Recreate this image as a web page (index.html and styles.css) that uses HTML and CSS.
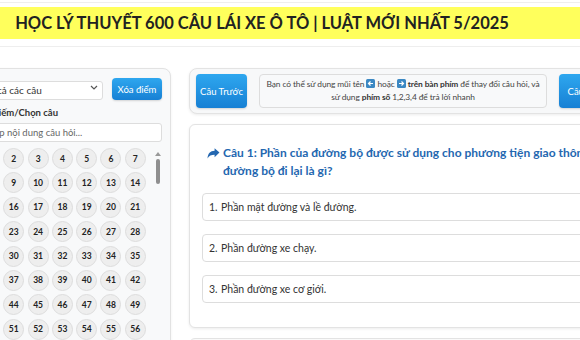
FILE: index.html
```html
<!DOCTYPE html>
<html lang="vi">
<head>
    <meta charset="UTF-8">
    <meta name="viewport" content="width=device-width, initial-scale=1.0">
    <title>Học lý thuyết 600 câu lái xe ô tô</title>
    <link rel="stylesheet" href="styles.css">
</head>
<body>
    <div class="topbar">
        <h1 class="banner">HỌC LÝ THUYẾT 600 CÂU LÁI XE Ô TÔ | LUẬT MỚI NHẤT 5/2025</h1>
    </div>

    <div class="layout">
        <!-- Danh sách câu hỏi -->
        <aside class="sidebar">
            <div class="filter-row">
                <div class="select-wrap">
                    <select class="select">
                        <option>Tất cả các câu</option>
                    </select>
                    <svg class="chevron" width="8" height="5" viewBox="0 0 8 5"><path d="M1 1l3 3 3-3" fill="none" stroke="#555" stroke-width="1.2"/></svg>
                </div>
                <button class="button blue small">Xóa điểm</button>
            </div>
            <label class="label" for="search">Tìm kiếm/Chọn câu</label>
            <input class="search" id="search" type="text" placeholder="Nhập nội dung câu hỏi...">
            <div class="grid-wrap">
                <div class="grid">
                    <span class="num active">1</span><span class="num">2</span><span class="num">3</span><span class="num">4</span><span class="num">5</span><span class="num">6</span><span class="num">7</span>
                    <span class="num">8</span><span class="num">9</span><span class="num">10</span><span class="num">11</span><span class="num">12</span><span class="num">13</span><span class="num">14</span>
                    <span class="num">15</span><span class="num">16</span><span class="num">17</span><span class="num">18</span><span class="num">19</span><span class="num">20</span><span class="num">21</span>
                    <span class="num">22</span><span class="num">23</span><span class="num">24</span><span class="num">25</span><span class="num">26</span><span class="num">27</span><span class="num">28</span>
                    <span class="num">29</span><span class="num">30</span><span class="num">31</span><span class="num">32</span><span class="num">33</span><span class="num">34</span><span class="num">35</span>
                    <span class="num">36</span><span class="num">37</span><span class="num">38</span><span class="num">39</span><span class="num">40</span><span class="num">41</span><span class="num">42</span>
                    <span class="num">43</span><span class="num">44</span><span class="num">45</span><span class="num">46</span><span class="num">47</span><span class="num">48</span><span class="num">49</span>
                    <span class="num">50</span><span class="num">51</span><span class="num">52</span><span class="num">53</span><span class="num">54</span><span class="num">55</span><span class="num">56</span>
                    <span class="num">57</span><span class="num">58</span><span class="num">59</span><span class="num">60</span><span class="num">61</span><span class="num">62</span><span class="num">63</span>
                </div>
                <div class="scrollbar">
                    <span class="scroll-up"></span>
                    <span class="scroll-thumb"></span>
                </div>
            </div>
        </aside>

        <!-- Nội dung câu hỏi -->
        <main class="content">
            <div class="nav-panel">
                <button class="button blue nav">Câu Trước</button>
                <div class="hint">
                    Bạn có thể sử dụng mũi tên
                    <svg class="key" width="9" height="9" viewBox="0 0 9 9"><rect width="9" height="9" rx="1.5" fill="#3b88c3"/><path d="M7 4.5H2.5M4.5 2.5l-2 2 2 2" fill="none" stroke="#fff" stroke-width="1.2"/></svg>
                    hoặc
                    <svg class="key" width="9" height="9" viewBox="0 0 9 9"><rect width="9" height="9" rx="1.5" fill="#3b88c3"/><path d="M2 4.5h4.5M4.5 2.5l2 2-2 2" fill="none" stroke="#fff" stroke-width="1.2"/></svg>
                    <b>trên bàn phím</b> để thay đổi câu hỏi, và sử dụng <b>phím số</b> 1,2,3,4 để trả lời nhanh
                </div>
                <button class="button blue nav">Câu Sau</button>
            </div>

            <div class="question-card">
                <h2 class="question">
                    <svg class="share" width="13" height="11" viewBox="0 0 24 20"><path d="M23 8L14 0.5v4.5C6 5.5 1.5 10 1 19c2.5-4.5 7-6.5 13-6.5V17z" fill="#2467b0"/></svg>
                    <span>Câu 1: Phần của đường bộ được sử dụng cho phương tiện giao thông đường bộ đi lại là gì?</span>
                </h2>
                <div class="answers">
                    <div class="answer"><span class="idx">1.</span>Phần mặt đường và lề đường.</div>
                    <div class="answer"><span class="idx">2.</span>Phần đường xe chạy.</div>
                    <div class="answer"><span class="idx">3.</span>Phần đường xe cơ giới.</div>
                </div>
            </div>

            <div class="panel-next"></div>
        </main>
    </div>
</body>
</html>
```

FILE: styles.css
```css
body {
    margin: 0;
    padding-top: 2px;
    font-family: Lato, "Noto Sans", sans-serif;
    color: #333;
    background: #fff;
    overflow: hidden;
}
.topbar {
    border-top: 1px solid #eee;
    border-bottom: 1px solid #eee;
    padding: 4px 0 7px;
}
.banner {
    margin: 0;
    height: 32px;
    line-height: 32px;
    background: #ffff5c;
    padding-right: 56px;
    text-align: center;
    font-family: Lato, sans-serif;
    font-size: 16.5px;
    font-weight: 700;
    color: #222;
    white-space: nowrap;
}
.layout {
    display: flex;
    align-items: flex-start;
    gap: 18px;
    margin: 21px 0 0 -35px;
}
/* Sidebar */
.sidebar {
    flex: none;
    width: 187px;
    padding: 9px 8px 9px 9px;
    background: #f8f9fa;
    border: 1px solid #e2e2e2;
    border-radius: 8px;
    height: 400px;
    box-shadow: 0 1px 3px rgba(0, 0, 0, 0.06);
}
.filter-row {
    display: flex;
    align-items: center;
    gap: 9px;
}
.select-wrap {
    position: relative;
    flex: 1;
}
.select {
    width: 100%;
    height: 19px;
    padding: 0 5px;
    appearance: none;
    border: 1px solid #ddd;
    border-radius: 3px;
    background: #fff;
    font-family: inherit;
    font-size: 10px;
    color: #333;
}
.chevron {
    position: absolute;
    right: 5px;
    top: 7px;
}
.button {
    color: white;
    border: none;
    border-radius: 4px;
    cursor: pointer;
    font-family: inherit;
}
.button.blue {
    background: linear-gradient(to bottom, #2ea7ef, #1780d4);
    box-shadow: 0 1px 2px rgba(0, 0, 0, 0.15);
}
.button.small {
    width: 50px;
    height: 22px;
    font-size: 9.5px;
    padding: 0;
}
.label {
    display: block;
    margin: 6px 0 3px;
    font-size: 9.5px;
    font-weight: 700;
    color: #333;
    line-height: 14px;
}
.search {
    display: block;
    box-sizing: border-box;
    width: 100%;
    height: 19px;
    padding: 0 6px;
    border: 1px solid #ddd;
    border-radius: 3px;
    font-family: inherit;
    font-size: 9.5px;
    outline: none;
}
.search::placeholder {
    color: #666;
}
.grid-wrap {
    display: flex;
    margin-top: 6px;
    height: 300px;
    overflow: hidden;
}
.grid {
    display: grid;
    grid-template-columns: repeat(7, 21px);
    gap: 3.4px 3.3px;
    padding-left: 4px;
    align-content: start;
}
.num {
    box-sizing: border-box;
    width: 21px;
    height: 21px;
    border-radius: 50%;
    background: #eee;
    border: 1px solid #ddd;
    display: flex;
    align-items: center;
    justify-content: center;
    font-size: 8.5px;
    font-weight: 700;
    color: #222;
}
.num.active {
    background: #ffe94a;
    border-color: #f0d800;
}
.scrollbar {
    margin-left: auto;
    margin-right: 2px;
    width: 5px;
    display: flex;
    flex-direction: column;
    align-items: center;
}
.scroll-up {
    margin-top: 4px;
    width: 0;
    height: 0;
    border-left: 3px solid transparent;
    border-right: 3px solid transparent;
    border-bottom: 4px solid #999;
}
.scroll-thumb {
    margin-top: 3px;
    width: 4px;
    height: 25px;
    border-radius: 3px;
    background: #8f8f8f;
}
/* Content */
.content {
    flex: none;
    width: 428px;
    display: flex;
    flex-direction: column;
    gap: 10px;
}
.nav-panel {
    display: flex;
    align-items: stretch;
    gap: 12px;
    padding: 5px 6px;
    background: #f7f8f9;
    border: 1px solid #e3e3e3;
    border-radius: 8px;
    box-shadow: 0 1px 3px rgba(0, 0, 0, 0.08);
}
.button.nav {
    flex: none;
    width: 51px;
    height: 34px;
    font-size: 9.5px;
    padding: 0;
}
.hint {
    flex: 1;
    padding: 3px 3px;
    background: #f8f9fa;
    border: 1px solid #ddd;
    border-radius: 4px;
    text-align: center;
    font-size: 8.4px;
    letter-spacing: -0.1px;
    line-height: 12.5px;
    color: #444;
}
.hint b {
    color: #333;
}
.key {
    vertical-align: -1px;
}
.question-card {
    padding: 13px 12px 24px;
    background: #fff;
    border: 1px solid #e3e3e3;
    border-radius: 6px;
    box-shadow: 0 1px 3px rgba(0, 0, 0, 0.08);
}
.question {
    display: flex;
    gap: 3px;
    margin: 6px 0 13px;
    padding-left: 5px;
    font-size: 12px;
    font-weight: 700;
    line-height: 18px;
    color: #2467b0;
}
.share {
    flex: none;
    margin-top: 4px;
}
.answers {
    display: flex;
    flex-direction: column;
    gap: 13px;
}
.answer {
    height: 28px;
    box-sizing: border-box;
    display: flex;
    align-items: center;
    padding: 0 6px;
    background: #fff;
    border: 1px solid #ddd;
    border-radius: 4px;
    font-size: 10.5px;
    color: #333;
}
.idx {
    width: 10px;
    margin-right: 2px;
}
.panel-next {
    height: 40px;
    background: #fafafa;
    border: 1px solid #e3e3e3;
    border-radius: 6px;
}
```
